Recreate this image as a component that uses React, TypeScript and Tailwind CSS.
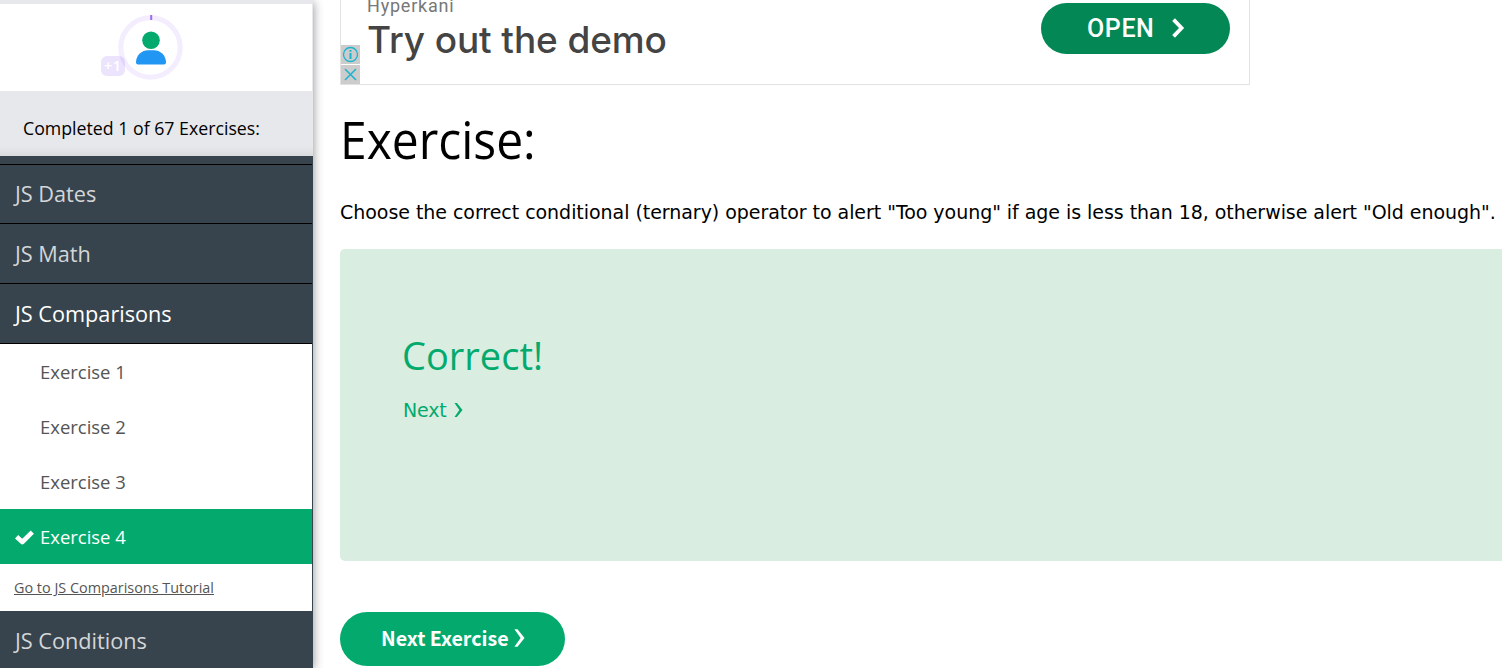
import React from "react";

function Chevron({ className, width = 3 }: { className: string; width?: number }) {
  return (
    <svg className={className} viewBox="0 0 12 18" fill="none" stroke="currentColor" strokeWidth={width}>
      <path d="M2 1.5L9.2 9L2 16.5" />
    </svg>
  );
}

function AngleMark({ className }: { className: string }) {
  return (
    <svg className={className} viewBox="0 0 10 16" fill="currentColor">
      <path d="M0.4 0H3.2L9.6 8L3.2 16H0.4L6 8Z" />
    </svg>
  );
}

function Avatar() {
  return (
    <svg className="block h-[87px] w-[312px]" viewBox="0 4 312 87">
      <circle cx="150.5" cy="47.5" r="29.7" fill="none" stroke="#f3edfe" strokeWidth="5" />
      <rect x="150.2" y="15" width="2" height="5" fill="#9b6bf2" />
      <circle cx="151" cy="40.3" r="8.8" fill="#04aa6d" />
      <path d="M136 62.5C136 55 142 50.3 148 50.3H154C160 50.3 166 55 166 62.5Q166 64.5 164 64.5H138Q136 64.5 136 62.5Z" fill="#2196f3" />
      <rect x="101" y="56" width="24" height="20" rx="6" fill="#9b6bf2" fillOpacity="0.19" />
      <text x="104" y="71.3" fontSize="14.5" fontWeight="600" fontFamily="Open Sans, sans-serif" textLength="17" fill="#ffffff">+1</text>
    </svg>
  );
}

function Topic({ label, active = false, className }: { label: string; active?: boolean; className: string }) {
  return (
    <div className={`flex w-[312px] items-center border-b border-black pl-[15px] text-[22px] ${active ? "text-white" : "text-[#d4d6d8]"} ${className}`}>
      <span className="origin-left scale-x-[0.985] whitespace-nowrap">{label}</span>
    </div>
  );
}

function Sidebar() {
  return (
    <aside className="z-10 flex h-[668px] w-[313px] shrink-0 flex-col overflow-hidden bg-[#38444d] font-['Open_Sans',sans-serif] shadow-[0_2px_10px_rgba(0,0,0,0.45)]">
      <div className="shrink-0 bg-[#e7e8eb] pt-1">
        <div className="w-[312px] bg-white">
          <Avatar />
        </div>
      </div>
      <div className="flex h-[65px] shrink-0 items-center bg-[#e7e8eb] bg-linear-to-t from-[#d9dcde] via-[#e7e8eb] via-15% to-[#e7e8eb] pt-[9px] pl-[23px] text-[18px] text-black">
        <span className="origin-left scale-x-[0.985] whitespace-nowrap">Completed 1 of 67 Exercises:</span>
      </div>
      <div className="h-[9px] w-[312px] shrink-0 border-b border-black" />
      <Topic label="JS Dates" className="h-[59px] shrink-0 pb-px" />
      <Topic label="JS Math" className="h-[60px] shrink-0" />
      <Topic label="JS Comparisons" active className="h-[60px] shrink-0" />
      <div className="w-[312px] shrink-0 bg-white text-[18px] text-[#555555]">
        {["Exercise 1", "Exercise 2", "Exercise 3"].map((name) => (
          <div key={name} className="flex h-[55px] items-center pt-[2px] pl-10">
            <span className="origin-left scale-x-[1.025] whitespace-nowrap">{name}</span>
          </div>
        ))}
        <div className="flex h-[55px] items-center bg-[#04aa6d] pt-[2px] pl-[15px] text-white">
          <svg className="mr-[6px] h-[15px] w-[19px]" viewBox="0 0 19 15" fill="none" stroke="currentColor" strokeWidth="4.6" strokeLinejoin="round">
            <path d="M1.6 6.8L7.3 12L17.3 2.2" />
          </svg>
          <span className="origin-left scale-x-[1.025] whitespace-nowrap">Exercise 4</span>
        </div>
        <div className="flex h-[47px] items-center pl-[14px] text-[15px]">
          <span className="origin-left scale-x-[0.96] whitespace-nowrap underline">Go to JS Comparisons Tutorial</span>
        </div>
      </div>
      <Topic label="JS Conditions" className="h-[60px] shrink-0" />
    </aside>
  );
}

function AdBanner() {
  return (
    <div className="flex h-[85px] w-[910px] overflow-hidden border-x border-b border-[#e2e2e2]">
      <div className="flex w-[19px] flex-col gap-px pt-[45px] text-[#19b4cf]">
        <div className="flex h-[19px] items-center justify-center bg-[#cccccc]">
          <svg className="h-[17px] w-[17px]" viewBox="0 0 17 17" fill="none" stroke="currentColor">
            <circle cx="8.5" cy="8.5" r="7" strokeWidth="1.3" />
            <path d="M8.5 7V13M8.5 4V5.8" strokeWidth="2" />
          </svg>
        </div>
        <div className="flex h-[19px] items-center justify-center bg-[#cccccc]">
          <svg className="h-[13px] w-[13px]" viewBox="0 0 13 13" stroke="currentColor" strokeWidth="1.5">
            <path d="M1 1L12 12M12 1L1 12" />
          </svg>
        </div>
      </div>
      <div className="-mt-[6px] flex flex-1 flex-col pl-[7px]">
        <div className="h-[24px] text-[18px] leading-[24px] text-[#777777] font-['Roboto',sans-serif] tracking-[0.8px]">Hyperkani</div>
        <div className="h-[44px] text-[37px] leading-[44px] font-medium text-[#444444] font-['Inter',sans-serif] tracking-[-0.1px] whitespace-nowrap">Try out the demo</div>
      </div>
      <div className="mt-[3px] mr-[19px] flex h-[51px] w-[189px] items-center rounded-full bg-[#038855] pl-[46px] text-white font-['Roboto',sans-serif]">
        <span className="text-[25px] font-medium tracking-[0.6px]">OPEN</span>
        <Chevron className="ml-[17px] mb-[2px] h-[20px] w-[14px]" width={3.4} />
      </div>
    </div>
  );
}

export default function App() {
  return (
    <div className="flex h-[668px] w-full overflow-hidden bg-white">
      <Sidebar />
      <main className="flex min-w-0 flex-1 flex-col pl-[27px] text-black">
        <AdBanner />
        <h1 className="mt-[16px] flex h-[76px] items-center text-[51px] leading-[76px] font-['Open_Sans',sans-serif]">
          <span className="origin-left scale-x-[0.94] whitespace-nowrap">Exercise:</span>
        </h1>
        <p className="mt-[20px] h-[30px] text-[19px] leading-[30px] tracking-[-0.044px] whitespace-nowrap font-['DejaVu_Sans',sans-serif]">
          Choose the correct conditional (ternary) operator to alert "Too young" if age is less than 18, otherwise alert "Old enough".
        </p>
        <section className="mt-[22px] h-[312px] shrink-0 rounded-l-[5px] bg-[#d9ede1] pl-[62px] text-[#04aa6d]">
          <h2 className="mt-[76px] h-[60px] text-[38px] leading-[60px] font-['Open_Sans',sans-serif]">
            <span className="inline-block origin-left whitespace-nowrap">Correct!</span>
          </h2>
          <div className="mt-[10px] flex h-[30px] items-center pl-px text-[19px] tracking-[-0.2px] font-['DejaVu_Sans',sans-serif]">
            Next
            <AngleMark className="ml-[8px] h-[14px] w-[9px]" />
          </div>
        </section>
        <button className="mt-[51px] flex h-[54px] w-[225px] shrink-0 items-center rounded-full bg-[#04aa6d] pb-[2px] pl-[41px] text-[20px] font-bold text-white font-['Noto_Sans_CJK_SC',sans-serif]">
          <span className="w-[128px] origin-left scale-x-[0.98] whitespace-nowrap">Next Exercise</span>
          <AngleMark className="ml-[5px] h-[18px] w-[11px]" />
        </button>
      </main>
    </div>
  );
}
